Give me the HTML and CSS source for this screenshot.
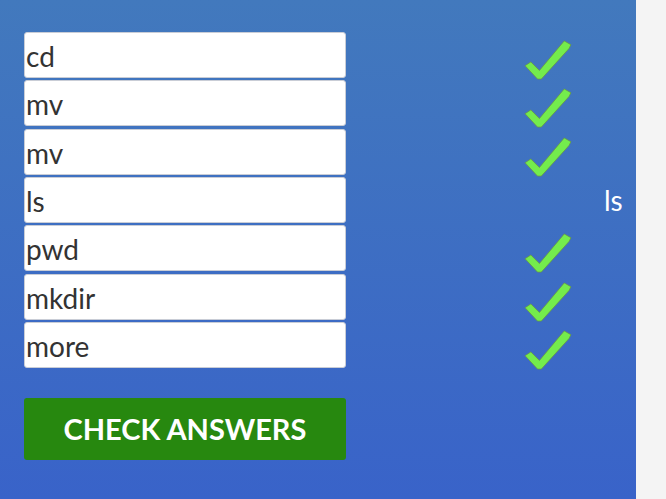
FILE: index.html
```html
<!DOCTYPE html>
<html>
<head>
<meta charset="utf-8">
<link rel="stylesheet" href="styles.css">
</head>
<body>
<div class="panel">
  <div class="rows">
    <div class="row"><input class="answer" value="cd"><span class="mark"><svg viewBox="0 0 50 44" class="check"><polygon points="1,28 7,24 16,33 42,2 49,6 47,10 18,42 14,42"/></svg></span><span class="correct"></span></div>
    <div class="row"><input class="answer" value="mv"><span class="mark"><svg viewBox="0 0 50 44" class="check"><polygon points="1,28 7,24 16,33 42,2 49,6 47,10 18,42 14,42"/></svg></span><span class="correct"></span></div>
    <div class="row"><input class="answer" value="mv"><span class="mark"><svg viewBox="0 0 50 44" class="check"><polygon points="1,28 7,24 16,33 42,2 49,6 47,10 18,42 14,42"/></svg></span><span class="correct"></span></div>
    <div class="row"><input class="answer" value="ls"><span class="mark"></span><span class="correct">ls</span></div>
    <div class="row"><input class="answer" value="pwd"><span class="mark"><svg viewBox="0 0 50 44" class="check"><polygon points="1,28 7,24 16,33 42,2 49,6 47,10 18,42 14,42"/></svg></span><span class="correct"></span></div>
    <div class="row"><input class="answer" value="mkdir"><span class="mark"><svg viewBox="0 0 50 44" class="check"><polygon points="1,28 7,24 16,33 42,2 49,6 47,10 18,42 14,42"/></svg></span><span class="correct"></span></div>
    <div class="row"><input class="answer" value="more"><span class="mark"><svg viewBox="0 0 50 44" class="check"><polygon points="1,28 7,24 16,33 42,2 49,6 47,10 18,42 14,42"/></svg></span><span class="correct"></span></div>
  </div>
  <button class="submit">CHECK ANSWERS</button>
</div>
</body>
</html>
```
FILE: styles.css
```css
html, body {
  margin: 0;
  padding: 0;
  background: #f4f4f4;
  height: 100%;
}
body {
  font-family: Lato, "Noto Sans", sans-serif;
  overflow: hidden;
}
.panel {
  width: 636px;
  height: 499px;
  box-sizing: border-box;
  padding: 32px 0 0 24px;
  background: linear-gradient(to bottom, #4279bd 0%, #3963c9 100%);
}
.rows {
  display: flex;
  flex-direction: column;
  gap: 2.33px;
}
.row {
  display: flex;
  align-items: center;
  height: 46px;
}
.answer {
  box-sizing: border-box;
  width: 322px;
  height: 46px;
  margin: 0;
  padding: 2px 0 0 1px;
  border: 1px solid #c9cdd6;
  border-radius: 3px;
  background: #fff;
  font-family: Lato, sans-serif;
  font-size: 28px;
  color: #333;
  outline: none;
}
.mark {
  width: 50px;
  height: 42px;
  margin-left: 177px;
  padding-top: 10px;
  display: flex;
}
.check {
  width: 50px;
  height: 42px;
  fill: #74ec4c;
  stroke: #6a9a40;
  stroke-width: 0.8;
  stroke-linejoin: round;
}
.correct {
  margin-left: 31px;
  color: #fff;
  font-size: 28px;
}
.submit {
  display: block;
  margin-top: 30px;
  width: 322px;
  height: 62px;
  border: none;
  border-radius: 3px;
  background: #27880f;
  color: #fff;
  font-family: Lato, sans-serif;
  font-weight: 700;
  font-size: 29px;
  padding: 0;
}
```
